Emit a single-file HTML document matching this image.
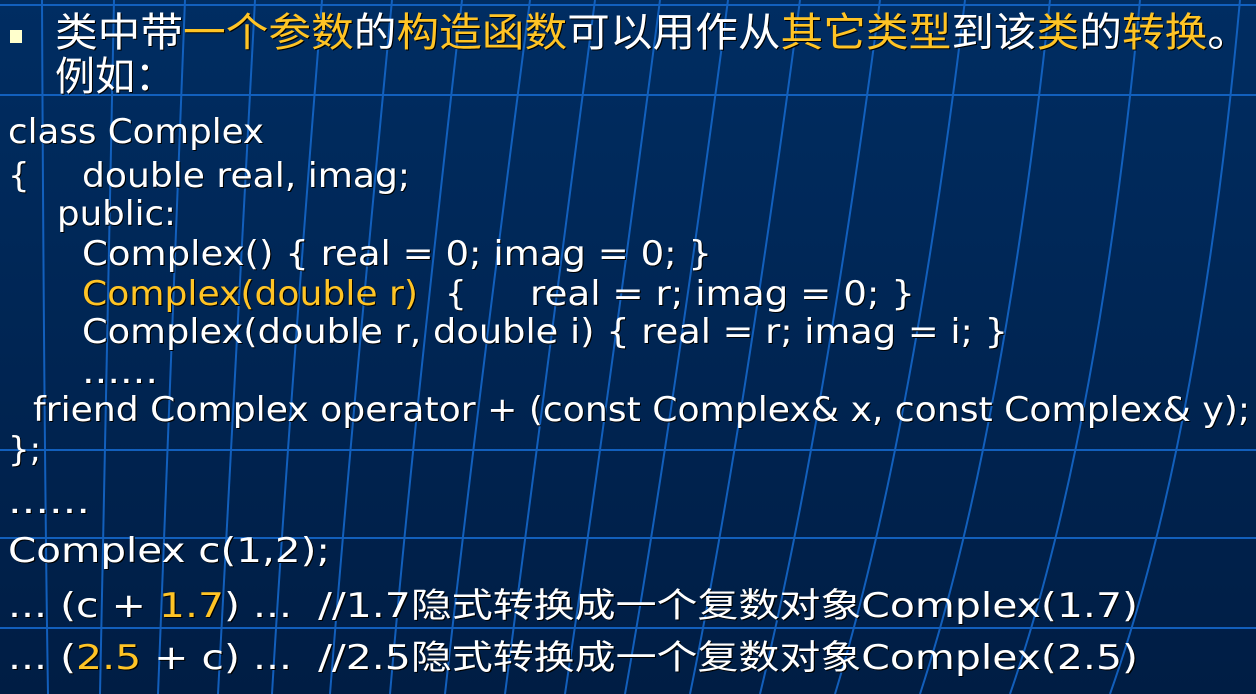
<!DOCTYPE html>
<html><head><meta charset="utf-8"><style>
html,body{margin:0;padding:0;width:1256px;height:694px;overflow:hidden;background:#002656;}
svg{display:block}
text{font-family:"DejaVu Sans","Noto Sans CJK SC",sans-serif;fill:#fff;text-shadow:1px 1px 0 #000;white-space:pre;}
.o{fill:#ffc425}
.t{font-size:40px;font-family:"Liberation Sans","Noto Sans CJK SC",sans-serif}
.c{font-size:34px}
</style></head><body>
<svg width="1256" height="694" viewBox="0 0 1256 694" xmlns="http://www.w3.org/2000/svg" xml:space="preserve">
<defs><linearGradient id="g" x1="0" y1="0" x2="0" y2="1"><stop offset="0" stop-color="#002d62"/><stop offset="1" stop-color="#001d44"/></linearGradient></defs>
<rect width="1256" height="694" fill="url(#g)"/>
<g stroke="#1466c8" stroke-width="2" fill="none" opacity="0.9">
<line x1="0" y1="5" x2="1256" y2="5"/>
<line x1="0" y1="95" x2="1256" y2="95"/>
<line x1="0" y1="450" x2="1256" y2="450"/>
<line x1="0" y1="538" x2="1256" y2="538"/>
<line x1="0" y1="628" x2="1256" y2="628"/>
<path d="M42 0 Q44 440 48 694"/>
<path d="M114 0 Q105 440 100 694"/>
<path d="M185 0 Q167 440 158 694"/>
<path d="M255 0 Q230 440 218 694"/>
<path d="M322 0 Q287 440 272 694"/>
<path d="M392 0 Q350 440 330 694"/>
<path d="M462 0 Q412 440 390 694"/>
<path d="M530 0 Q473 440 445 694"/>
<path d="M595 0 Q538 440 505 694"/>
<path d="M660 0 Q603 440 565 694"/>
<path d="M728 0 Q670 440 625 694"/>
<path d="M800 0 Q742 440 690 694"/>
<path d="M880 0 Q822 440 760 694"/>
<path d="M965 0 Q912 440 835 694"/>
<path d="M1050 0 Q1003 440 920 694"/>
<path d="M1140 0 Q1098 440 1010 694"/>
<path d="M1240 0 Q1200 440 1110 694"/>
</g>
<rect x="10" y="30" width="12" height="13" fill="#ffffcc"/>
<text class="t" x="55" y="46" textLength="1195" lengthAdjust="spacingAndGlyphs">类中带<tspan class="o">一个参数</tspan>的<tspan class="o">构造函数</tspan>可以用作从<tspan class="o">其它类型</tspan>到该<tspan class="o">类</tspan>的<tspan class="o">转换</tspan>。</text>
<text class="t" x="55" y="90">例如：</text>
<text class="c" x="8" y="143" textLength="256" lengthAdjust="spacingAndGlyphs">class Complex</text>
<text class="c" x="8" y="187">{</text>
<text class="c" x="82" y="187" textLength="328" lengthAdjust="spacingAndGlyphs">double real, imag;</text>
<text class="c" x="57" y="225" textLength="119" lengthAdjust="spacingAndGlyphs">public:</text>
<text class="c" x="82" y="265" textLength="630" lengthAdjust="spacingAndGlyphs">Complex() { real = 0; imag = 0; }</text>
<text class="c o" x="82" y="305" textLength="336" lengthAdjust="spacingAndGlyphs">Complex(double r)</text>
<text class="c" x="445" y="305">{</text>
<text class="c" x="530" y="305" textLength="385" lengthAdjust="spacingAndGlyphs">real = r; imag = 0; }</text>
<text class="c" x="82" y="343" textLength="926" lengthAdjust="spacingAndGlyphs">Complex(double r, double i) { real = r; imag = i; }</text>
<text class="c" x="82" y="383" textLength="76" lengthAdjust="spacingAndGlyphs">......</text>
<text class="c" x="33" y="421" textLength="1217" lengthAdjust="spacingAndGlyphs">friend Complex operator + (const Complex&amp; x, const Complex&amp; y);</text>
<text class="c" x="8" y="461">};</text>
<text class="c" x="8" y="513" textLength="82" lengthAdjust="spacingAndGlyphs">......</text>
<text class="c" x="8" y="562" textLength="322" lengthAdjust="spacingAndGlyphs">Complex c(1,2);</text>
<text class="c" x="8" y="617" textLength="1130" lengthAdjust="spacingAndGlyphs">... (c + <tspan class="o">1.7</tspan>) ...  //1.7隐式转换成一个复数对象Complex(1.7)</text>
<text class="c" x="8" y="669" textLength="1130" lengthAdjust="spacingAndGlyphs">... (<tspan class="o">2.5</tspan> + c) ...  //2.5隐式转换成一个复数对象Complex(2.5)</text>
</svg>
</body></html>
